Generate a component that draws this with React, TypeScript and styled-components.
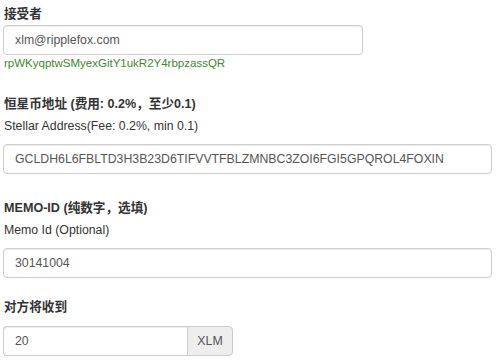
import React from "react";
import styled, { createGlobalStyle } from "styled-components";

const GlobalStyle = createGlobalStyle`
  body {
    margin: 0;
    background: #fff;
    font-family: "Liberation Sans", "Noto Sans CJK SC", sans-serif;
    color: #333;
  }
`;

function App() {
  return (
    <>
      <GlobalStyle />
      <Form>
        <Group>
          <Label>接受者</Label>
          <Input width={360} defaultValue="xlm@ripplefox.com" />
          <Help>rpWKyqptwSMyexGitY1ukR2Y4rbpzassQR</Help>
        </Group>

        <Group gap={24}>
          <Label>恒星币地址 (费用: 0.2%，至少0.1)</Label>
          <SubLabel>Stellar Address(Fee: 0.2%, min 0.1)</SubLabel>
          <Input
            width={489}
            defaultValue="GCLDH6L6FBLTD3H3B23D6TIFVVTFBLZMNBC3ZOI6FGI5GPQROL4FOXIN"
          />
        </Group>

        <Group gap={25}>
          <Label>MEMO-ID (纯数字，选填)</Label>
          <SubLabel>Memo Id (Optional)</SubLabel>
          <Input width={489} defaultValue="30141004" />
        </Group>

        <Group gap={20}>
          <Label spaced>对方将收到</Label>
          <InputGroup>
            <GroupedInput defaultValue="20" />
            <Addon>XLM</Addon>
          </InputGroup>
        </Group>
      </Form>
    </>
  );
}

export default App;

const Form = styled.div`
  padding: 5px 8px 0 3px;
  display: flex;
  flex-direction: column;
`;

const Group = styled.div<{ gap?: number }>`
  display: flex;
  flex-direction: column;
  margin-top: ${(p) => p.gap ?? 0}px;
`;

const Label = styled.div<{ spaced?: boolean }>`
  font-size: 12.6px;
  font-weight: bold;
  line-height: 18px;
  padding-left: 1px;
  margin-bottom: ${(p) => (p.spaced ? 10 : 2)}px;
`;

const SubLabel = styled.div`
  font-size: 12.3px;
  line-height: 18px;
  padding-left: 1px;
  margin: 2px 0 9px;
`;

const Input = styled.input<{ width: number }>`
  box-sizing: border-box;
  width: ${(p) => p.width}px;
  height: 30px;
  padding: 0 11px;
  font-family: inherit;
  font-size: 12.3px;
  color: #555;
  border: 1px solid #ccc;
  border-radius: 4px;
  box-shadow: inset 0 1px 1px rgba(0, 0, 0, 0.075);
  outline: none;
  background: #fff;
`;

const Help = styled.div`
  font-size: 11.5px;
  line-height: 16px;
  color: #3b8a2a;
  padding-left: 1px;
`;

const InputGroup = styled.div`
  display: flex;
  width: 230px;
  height: 30px;
`;

const GroupedInput = styled.input`
  box-sizing: border-box;
  flex: 1;
  min-width: 0;
  height: 30px;
  padding: 0 11px;
  font-family: inherit;
  font-size: 12.3px;
  color: #555;
  border: 1px solid #ccc;
  border-right: none;
  border-radius: 4px 0 0 4px;
  box-shadow: inset 0 1px 1px rgba(0, 0, 0, 0.075);
  outline: none;
`;

const Addon = styled.div`
  box-sizing: border-box;
  width: 46px;
  display: flex;
  align-items: center;
  justify-content: center;
  font-size: 12.3px;
  color: #555;
  background: #eee;
  border: 1px solid #ccc;
  border-radius: 0 4px 4px 0;
`;
